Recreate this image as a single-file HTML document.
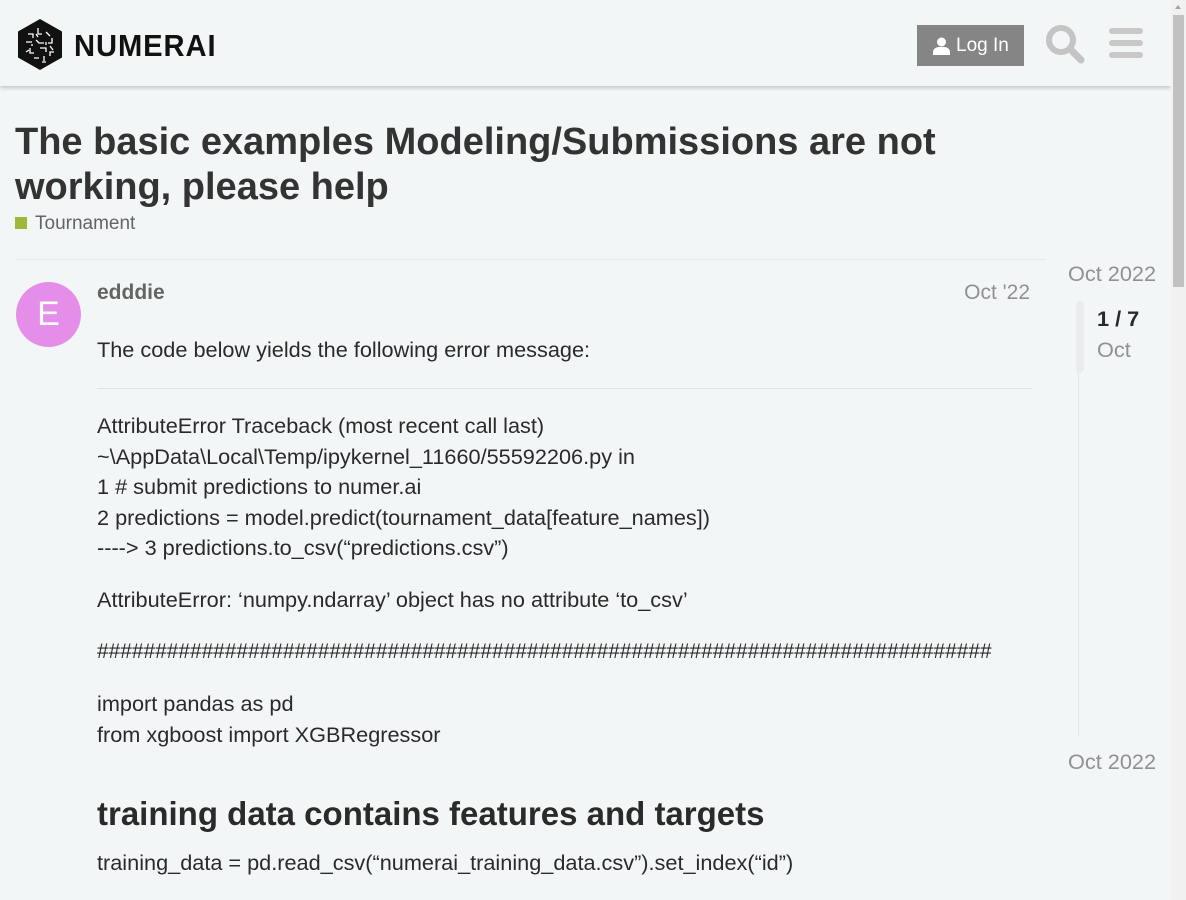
<!DOCTYPE html>
<html><head><style>
body{margin:0;background:#f3f6f7;font-family:"Liberation Sans",sans-serif;color:#222;width:1186px;height:900px;overflow:hidden;position:relative}
.hdr{position:absolute;left:0;top:0;width:1171px;height:86px;background:#f3f6f7;box-shadow:0 2px 4px rgba(0,0,0,.2)}
.sb{position:absolute;right:0;top:0;width:15px;height:900px;background:#f1f1f1}
.thumb{position:absolute;left:2px;top:15px;width:11px;height:272px;background:#c1c1c1}
.p{position:absolute;margin:0;font-size:21.7px;line-height:30.6px;color:#2a2a2a;white-space:nowrap}
</style></head><body>
<div class="hdr">
<svg style="position:absolute;left:16px;top:18px" width="48" height="53" viewBox="0 0 48 53"><polygon points="24,1 46,13.5 46,39.5 24,52 2,39.5 2,13.5" fill="#111"/>
<g stroke="#fff" stroke-width="1.3" fill="none"><path d="M12 16h5v4M22 10v6h4M30 14l4 4M36 20v5h-4M10 24h6M20 22l3 3h5M14 30v5h4M24 30h6v4M34 28l3 4M18 40h5M28 38v5M10 34l3-2M38 34h-4v4M20 16l2 3M30 24v3M26 44h4M16 26v2"/></g></svg>
<div style="position:absolute;left:74px;top:28px;font-size:31px;letter-spacing:1px;color:#111;font-weight:bold;transform:scaleX(.94);transform-origin:left">NUMERAI</div>
<div style="position:absolute;left:917px;top:25px;width:107px;height:41px;background:#858585;color:#fff;font-size:19px;line-height:41px">
<svg style="position:absolute;left:16px;top:12px" width="17" height="18" viewBox="0 0 17 18"><circle cx="8.5" cy="5" r="4.5" fill="#fff"/><path d="M0 18v-3c0-3 3-5 6-5h5c3 0 6 2 6 5v3z" fill="#fff"/></svg>
<span style="position:absolute;left:39px">Log In</span></div>
<svg style="position:absolute;left:1045px;top:24px" width="40" height="40" viewBox="0 0 40 40"><circle cx="16" cy="16" r="12" stroke="#c4c4c4" stroke-width="6" fill="none"/><path d="M25 25l11 11" stroke="#c4c4c4" stroke-width="7" stroke-linecap="round"/></svg>
<div style="position:absolute;left:1109px;top:28px;width:34px">
<div style="height:6px;background:#c8c8c8;border-radius:3px"></div><div style="height:6px;background:#c8c8c8;border-radius:3px;margin-top:6px"></div><div style="height:6px;background:#c8c8c8;border-radius:3px;margin-top:6px"></div></div>
</div>
<div class="sb"><div style="position:absolute;left:4px;top:5px;border:3px solid transparent;border-bottom:4px solid #a3a3a3;border-top:0"></div><div class="thumb"></div></div>
<h1 style="position:absolute;left:15px;top:120px;margin:0;font-size:38px;line-height:45px;font-weight:bold;color:#333;width:1000px">The basic examples Modeling/Submissions are not working, please help</h1>
<div style="position:absolute;left:15px;top:217px;width:12px;height:12px;background:#9eb83b"></div>
<div style="position:absolute;left:35px;top:213px;font-size:19px;color:#646464">Tournament</div>
<div style="position:absolute;left:15px;top:259px;width:1031px;height:1px;background:#e5e8e9"></div>
<div style="position:absolute;left:16px;top:282px;width:65px;height:65px;border-radius:50%;background:#e48eea;color:#fff;font-size:34px;line-height:65px;text-align:center">E</div>
<div style="position:absolute;left:97px;top:281px;font-size:21px;font-weight:bold;color:#646464">edddie</div>
<div style="position:absolute;right:156px;top:281px;font-size:21px;color:#919191">Oct '22</div>
<p class="p" style="left:97px;top:335px">The code below yields the following error message:</p>
<div style="position:absolute;left:97px;top:388px;width:935px;height:1px;background:#dfe2e3"></div>
<p class="p" style="left:97px;top:411px">AttributeError Traceback (most recent call last)<br>~\AppData\Local\Temp/ipykernel_11660/55592206.py in<br>1 # submit predictions to numer.ai<br>2 predictions = model.predict(tournament_data[feature_names])<br>----&gt; 3 predictions.to_csv(“predictions.csv”)</p>
<p class="p" style="left:97px;top:637px">AttributeError: ‘numpy.ndarray’ object has no attribute ‘to_csv’</p>
<p class="p" style="left:97px;top:585px;display:none"></p>
<p class="p" style="left:97px;top:585px">AttributeError: ‘numpy.ndarray’ object has no attribute ‘to_csv’</p>
<p class="p" style="left:97px;top:637px;font-size:20.9px;background:#f3f6f7">#############################################################################</p>
<p class="p" style="left:97px;top:689px">import pandas as pd<br>from xgboost import XGBRegressor</p>
<h2 style="position:absolute;left:97px;top:794px;margin:0;font-size:33px;line-height:40px;color:#2a2a2a">training data contains features and targets</h2>
<p class="p" style="left:97px;top:848px">training_data = pd.read_csv(“numerai_training_data.csv”).set_index(“id”)</p>
<div style="position:absolute;left:1068px;top:261px;font-size:21.7px;color:#919191">Oct 2022</div>
<div style="position:absolute;left:1078px;top:300px;width:1px;height:436px;background:#e5e8e9"></div>
<div style="position:absolute;left:1076px;top:301px;width:8px;height:72px;background:#e9ebec;border-radius:4px"></div>
<div style="position:absolute;left:1097px;top:306px;font-size:21.7px;font-weight:bold;color:#2a2a2a">1 / 7</div>
<div style="position:absolute;left:1097px;top:337px;font-size:21.7px;color:#919191">Oct</div>
<div style="position:absolute;left:1068px;top:749px;font-size:21.7px;color:#919191">Oct 2022</div>
</body></html>
